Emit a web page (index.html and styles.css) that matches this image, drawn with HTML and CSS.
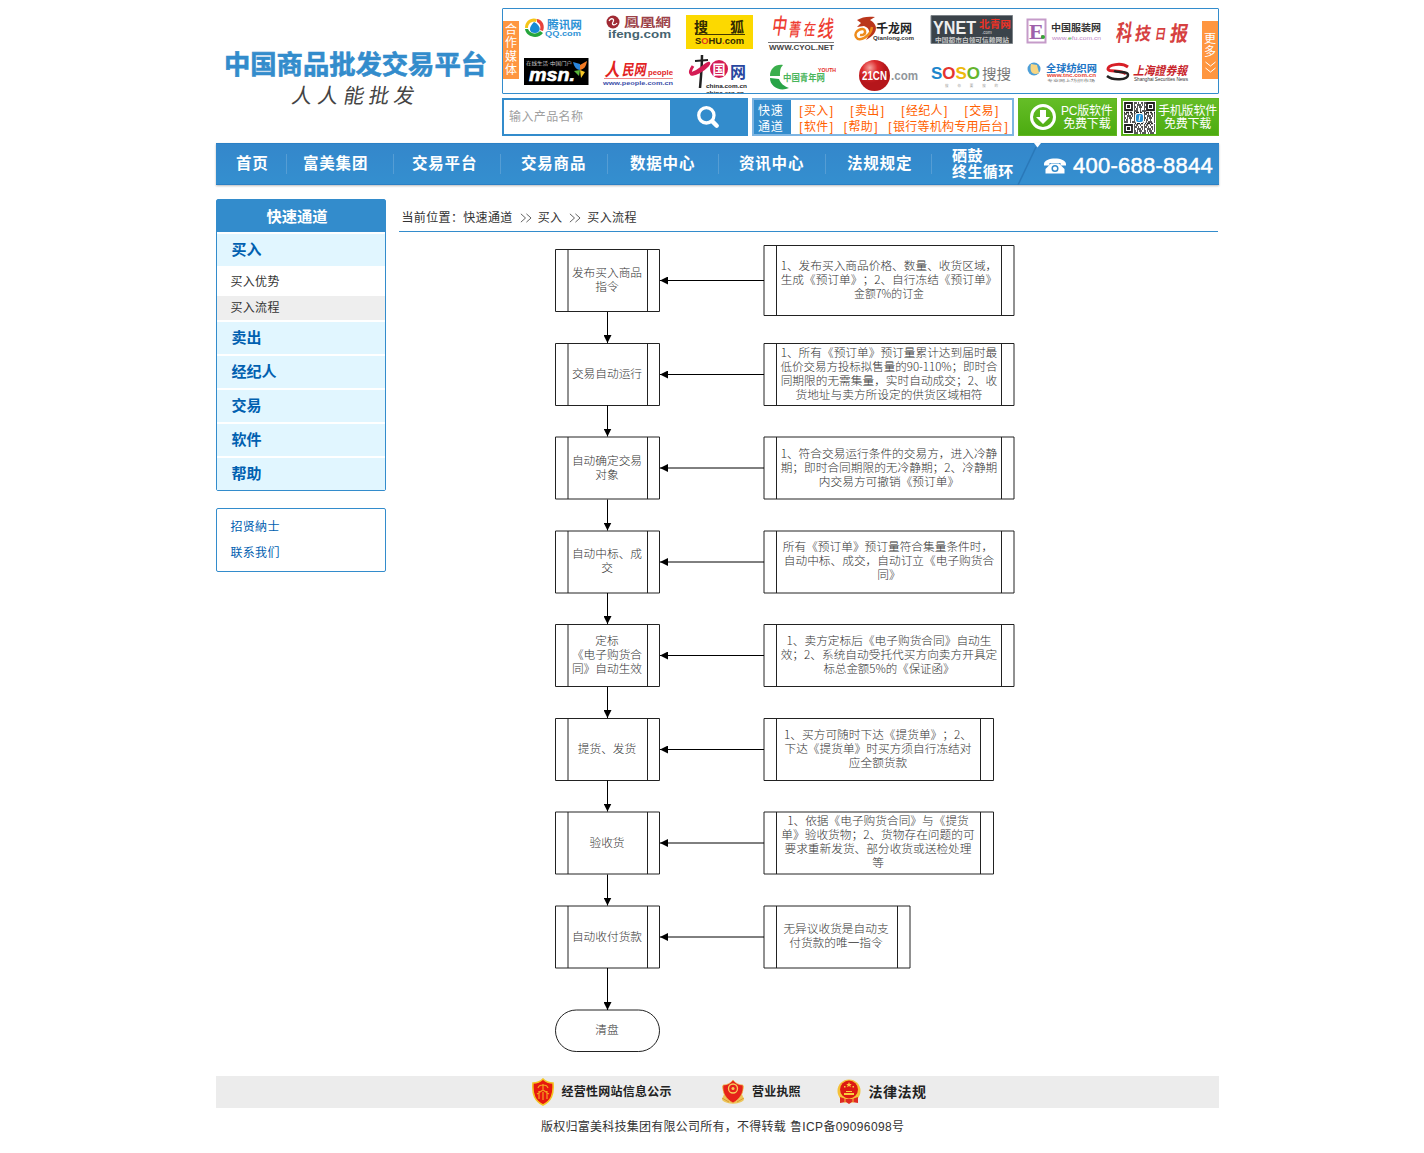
FILE: index.html
```html
<!DOCTYPE html>
<html lang="zh-CN">
<head>
<meta charset="utf-8">
<title>中国商品批发交易平台</title>
<link rel="stylesheet" href="styles.css">
</head>
<body>
<div class="page">
<header class="header">
  <svg class="brand" viewBox="216 8 286 128">
    <text class="brand-name" x="224" y="73.500" textLength="263" lengthAdjust="spacingAndGlyphs">中国商品批发交易平台</text>
    <g class="slogan" transform="translate(17 0) skewX(-10)">
      <text x="292" y="103">人</text><text x="318" y="103">人</text><text x="344" y="103">能</text><text x="369" y="103">批</text><text x="394" y="103">发</text>
    </g>
  </svg>
  <div class="header-right">
    <div class="media">
      <div class="tab">合作媒体</div>
      <div class="logos">
        <svg viewBox="519 9 81 42">
          <path d="M525 28c0-7 6-11 12-9l-1 3c-5-1-8 2-8 6z" fill="#f5c518"/>
          <path d="M537 19c6 1 8 7 6 12l-3-1c1-4 0-6-3-8z" fill="#e8413a"/>
          <path d="M525 29c1 8 13 11 18 4l-3-2c-3 4-10 3-12-2z" fill="#25a53c"/>
          <path d="M534 22c8 4 7 11 1 11s-7-5-1-11z" fill="#168bd3"/>
          <text x="547" y="29" font-size="11" font-weight="700" fill="#2e93d6" textLength="35" lengthAdjust="spacingAndGlyphs">腾讯网</text>
          <text x="545" y="36" font-size="7.500" font-weight="700" fill="#2e93d6" textLength="36" lengthAdjust="spacingAndGlyphs">QQ.com</text>
        </svg>
        <svg viewBox="600 9 80 42">
          <circle cx="613" cy="22" r="6.500" fill="#a02a34"/><path d="M609 21c2-4 6-2 4 1s2 4 4 1" fill="none" stroke="#fff" stroke-width="1.300"/>
          <text x="624" y="27" font-size="12" font-weight="700" fill="#9c4248" textLength="47" lengthAdjust="spacingAndGlyphs">鳳凰網</text>
          <text x="608" y="38" font-size="10" font-weight="700" fill="#466470" textLength="63" lengthAdjust="spacingAndGlyphs">ifeng.com</text>
        </svg>
        <svg viewBox="680 9 82 42">
          <path fill="#fcd900" d="M686 15h67v34h-67z"/>
          <text x="694" y="32" font-size="14" font-weight="700" fill="#332b00">搜</text><text x="730" y="32" font-size="14" font-weight="700" fill="#332b00">狐</text>
          <path d="M695 34.500h50" stroke="#443900"/>
          <text x="695" y="44" font-size="8.500" font-weight="700" fill="#332b00" textLength="49" lengthAdjust="spacingAndGlyphs">S<tspan fill="#e03a1d">O</tspan>HU<tspan fill="#e03a1d">.</tspan>com</text>
        </svg>
        <svg viewBox="762 9 86 42">
          <g fill="#ee3d32" font-weight="500" transform="translate(4 0) skewX(-8)"><text x="772" y="34" font-size="22" textLength="15" lengthAdjust="spacingAndGlyphs">中</text><text x="789" y="36" font-size="18" textLength="12" lengthAdjust="spacingAndGlyphs">菁</text><text x="804" y="35" font-size="16" textLength="12" lengthAdjust="spacingAndGlyphs">在</text><text x="818" y="37" font-size="23" textLength="16" lengthAdjust="spacingAndGlyphs">线</text></g>
          <path d="M768 42.500h66" stroke="#777"/>
          <text x="769" y="50" font-size="6.500" font-weight="700" fill="#444" textLength="65" lengthAdjust="spacingAndGlyphs">WWW.CYOL.NET</text>
        </svg>
        <svg viewBox="848 9 77 42">
          <path d="M857 20c5-3 11-4 18-3l-5 3c9 5 8 14-4 20 5-7 4-12-2-14l-7 1 4-4z" fill="#ba361c"/>
          <path d="M872 27c-1 9-13 16-16 10s8-11 9-6-5 4-5 4" fill="none" stroke="#ee8b1b" stroke-width="2.500"/>
          <text x="876" y="33" font-size="12" font-weight="700" fill="#222" textLength="36" lengthAdjust="spacingAndGlyphs">千龙网</text>
          <text x="873" y="39.500" font-size="5.500" font-weight="700" fill="#333" textLength="41" lengthAdjust="spacingAndGlyphs">Qianlong.com</text>
        </svg>
        <svg viewBox="925 9 93 42">
          <path fill="#3b434a" stroke="#7c8388" d="M931 15.500h81.500v28H931z"/>
          <text x="933" y="33.500" font-size="17.500" font-weight="700" fill="#eee" textLength="43" lengthAdjust="spacingAndGlyphs">YNET</text>
          <text x="979" y="27.500" font-size="10" font-weight="700" fill="#ee3226" textLength="32" lengthAdjust="spacingAndGlyphs">北青网</text>
          <text x="982" y="34" font-size="4.500" fill="#ddd">.com</text>
          <text x="935" y="41.500" font-size="5.500" font-weight="700" fill="#ccc" textLength="74" lengthAdjust="spacingAndGlyphs">中国都市白领可信赖网站</text>
        </svg>
        <svg viewBox="1018 9 92 42">
          <path d="M1027.500 19.500h18v23h-18z" fill="#fff" stroke="#c59bc9" stroke-width="2"/>
          <text x="1029" y="38.500" font-family="Liberation Serif" font-size="22" font-weight="700" fill="#9e60aa">E</text><circle cx="1043" cy="37" r="2" fill="#36a536"/>
          <text x="1051" y="31" font-size="9.500" font-weight="700" fill="#333" textLength="50" lengthAdjust="spacingAndGlyphs">中国服装网</text>
          <text x="1052" y="40" font-size="6" fill="#c186c6" textLength="49" lengthAdjust="spacingAndGlyphs">www.<tspan fill="#36a536">e</tspan>fu.com.cn</text>
        </svg>
        <svg viewBox="1110 9 92 42">
          <g fill="#d64040" font-weight="700" transform="translate(5 0) skewX(-8)"><text x="1116" y="41" font-size="23" textLength="16" lengthAdjust="spacingAndGlyphs">科</text><text x="1135" y="40" font-size="18" textLength="16" lengthAdjust="spacingAndGlyphs">技</text><text x="1155" y="39" font-size="14" textLength="11" lengthAdjust="spacingAndGlyphs">日</text><text x="1170" y="41" font-size="21" textLength="18" lengthAdjust="spacingAndGlyphs">报</text></g>
        </svg>
        <svg viewBox="519 51 81 42">
          <path d="M524 58h64.500v27H524z"/>
          <text x="526" y="65" font-size="5" fill="#ccc" textLength="46" lengthAdjust="spacingAndGlyphs">在线生活·中国门户</text>
          <text x="529" y="80.500" font-size="19" font-style="italic" font-weight="700" fill="#fff" stroke="#fff" stroke-width=".600" textLength="46" lengthAdjust="spacingAndGlyphs">msn.</text>
          <path d="M573 62l7 2v6c-4 0-6-4-7-8z" fill="#2a86dd"/><path d="M580 65l7-4c-1 6-3 8-7 9z" fill="#f47b24"/><path d="M574 71l6-1-1 6z" fill="#5bb53b"/><path d="M580 70l5 2-4 6z" fill="#f8c726"/>
        </svg>
        <svg viewBox="600 51 80 42">
          <g fill="#e2231f" font-weight="700" transform="translate(14 0) skewX(-10)"><text x="604" y="76" font-size="18" textLength="15" lengthAdjust="spacingAndGlyphs">人</text><text x="621" y="75" font-size="15" textLength="24" lengthAdjust="spacingAndGlyphs">民网</text></g>
          <text x="648" y="75" font-size="8" font-weight="700" fill="#e2231f" textLength="25" lengthAdjust="spacingAndGlyphs">people</text>
          <path d="M604 78.500h69" stroke="#e88"/>
          <text x="603" y="84.500" font-size="6" font-weight="700" fill="#3c4fa9" textLength="70" lengthAdjust="spacingAndGlyphs">www.people.com.cn</text>
        </svg>
        <svg viewBox="680 51 82 42">
          <path d="M702 55c0 12-1 22-2 33" fill="none" stroke="#222" stroke-width="2.500"/><path d="M695 61l13-1" stroke="#222" stroke-width="2"/>
          <path d="M693 66c-6 9-1 10 6 6s13-11 8-8-6 6-16 10" fill="none" stroke="#d41c54" stroke-width="3"/>
          <ellipse cx="719" cy="69" rx="9" ry="9" fill="#d41c54"/><text x="712.500" y="74" font-size="13" font-weight="700" fill="#fff">国</text>
          <text x="730" y="78" font-size="16" font-weight="700" fill="#2846a0">网</text>
          <text x="706" y="88" font-size="6" font-weight="700" fill="#222" textLength="41" lengthAdjust="spacingAndGlyphs">china.com.cn</text>
          <text x="706" y="94.500" font-size="6" font-weight="700" fill="#222" textLength="38" lengthAdjust="spacingAndGlyphs">china.org.cn</text>
        </svg>
        <svg viewBox="762 51 86 42">
          <path d="M783 65c-8-1-13 4-13 11l10 0c0-5 0-8 3-11z" fill="#3aae4c"/><path d="M770 78l9 1c2 5 5 7 10 9-9 4-19-1-19-10z" fill="#28a447"/>
          <text x="783" y="81" font-size="9.500" font-weight="700" fill="#49b55b" textLength="42" lengthAdjust="spacingAndGlyphs">中国青年网</text>
          <text x="818" y="71.500" font-size="5" font-weight="700" fill="#e52a27" textLength="18" lengthAdjust="spacingAndGlyphs">YOUTH</text>
        </svg>
        <svg viewBox="848 51 77 42">
          <defs><radialGradient id="ball" cx=".35" cy=".25"><stop stop-color="#f6a5a0"/><stop offset=".5" stop-color="#dc2a2c"/><stop offset="1" stop-color="#b5161b"/></radialGradient></defs>
          <circle cx="874.500" cy="75.500" r="15.500" fill="url(#ball)"/>
          <text x="862" y="80" font-size="12" font-weight="700" fill="#fff" textLength="25" lengthAdjust="spacingAndGlyphs">21CN</text>
          <text x="891" y="80" font-size="13" font-weight="700" fill="#90969b" textLength="27" lengthAdjust="spacingAndGlyphs">.com</text>
        </svg>
        <svg viewBox="925 51 93 42">
          <text x="931" y="79" font-size="17" font-weight="700" textLength="49" lengthAdjust="spacingAndGlyphs"><tspan fill="#1c86cc">S</tspan><tspan fill="#e5352f">O</tspan><tspan fill="#eeb90b">S</tspan><tspan fill="#65b52e">O</tspan></text>
          <text x="982" y="78.500" font-size="14" fill="#777" textLength="29" lengthAdjust="spacingAndGlyphs">搜搜</text>
          <text x="945" y="87" font-size="3.500" fill="#999" textLength="53">搜你要搜的</text>
        </svg>
        <svg viewBox="1018 51 92 42">
          <circle cx="1034" cy="69" r="6.500" fill="#4d9fd8"/><path d="M1031 64c-2 8 2 12 8 9l-2-8z" fill="#f7d683"/>
          <text x="1046" y="71.500" font-size="10" font-weight="700" fill="#1c75c5" textLength="51" lengthAdjust="spacingAndGlyphs">全球纺织网</text>
          <text x="1047" y="77" font-size="4.500" font-weight="700" fill="#e53f30" textLength="49" lengthAdjust="spacingAndGlyphs">www.tnc.com.cn</text>
          <text x="1047" y="82" font-size="3.500" fill="#777" textLength="48" lengthAdjust="spacingAndGlyphs">专业网上纺织市场</text>
        </svg>
        <svg viewBox="1110 51 92 42">
          <path d="M1128 67c-7-5-20-2-20 2 0 3 14 1 18 5" fill="none" stroke="#d71f27" stroke-width="3"/><path d="M1107 76c6 5 21 4 21-1 0-4-10-2-14-4" fill="none" stroke="#222" stroke-width="2.500"/>
          <text x="1133" y="75" font-size="12" font-style="italic" font-weight="700" fill="#c8242a" textLength="54" lengthAdjust="spacingAndGlyphs">上海證券報</text>
          <text x="1134" y="81" font-size="4.500" fill="#333" textLength="54" lengthAdjust="spacingAndGlyphs">Shanghai Securities News</text>
        </svg>
      </div>
      <div class="tab more">更多<svg width="11" height="12" viewBox="0 0 11 12"><path d="M.500 1l5 4 5-4M.500 7l5 4 5-4" fill="none" stroke="#fff"/></svg></div>
    </div>
    <div class="tools">
      <div class="search"><span class="field">输入产品名称</span><span class="go"><svg width="24" height="24" viewBox="0 0 22 22"><circle cx="9.500" cy="9.500" r="7" fill="none" stroke="#fff" stroke-width="3"/><path d="M15 15l4 4" stroke="#fff" stroke-width="4" stroke-linecap="round"/></svg></span></div>
      <div class="quick">
        <div class="quick-label">快速<br>通道</div>
        <div class="quick-links">
          <div class="row first"><a>买入</a><a>卖出</a><a>经纪人</a><a>交易</a></div>
          <div class="row"><a>软件</a><a>帮助</a><a>银行等机构专用后台</a></div>
        </div>
      </div>
      <div class="dl pc"><svg width="28" height="28" viewBox="0 0 28 28"><circle cx="14" cy="14" r="11.500" fill="none" stroke="#fff" stroke-width="3"/><path d="M11 7h6v7h4l-7 7-7-7h4z" fill="#fff"/></svg><span>PC版软件<br>免费下载</span></div>
      <div class="dl phone"><svg width="33" height="33" viewBox="0 0 33 33"><path fill="#fff" d="M0 0h33v33H0z"/>
        <g stroke="#222" stroke-width="1.400" fill="none">
        <path stroke-dasharray="3 1 1 2 2 1" d="M11 2h12M1 13h31M11 26h21"/><path stroke-dasharray="1 2 4 1 1 1" d="M11 4h12M1 15h31M11 28h21"/><path stroke-dasharray="2 1 1 1 3 2" d="M11 6h12M1 17h31M11 30h21"/><path stroke-dasharray="1 1 2 2 1 3" d="M11 8h12M1 19h31M11 24h21"/><path stroke-dasharray="4 2 1 1" d="M11 10h12M1 21h31M11 32h21"/><path stroke-dasharray="1 1 3 1 2 2" d="M1 11.500h31M12 22.500h20"/>
        <path stroke-width="1.800" d="M2 2h7v7H2zM24 2h7v7h-7zM2 24h7v7H2z"/></g>
        <path fill="#222" d="M4 4h3v3H4zM26 4h3v3h-3zM4 26h3v3H4z"/><rect x="12" y="12" width="9" height="10" rx="2" fill="#fff"/><rect x="13" y="13" width="7" height="8" rx="2" fill="#2292d8"/><path d="M17 14l-1 6" stroke="#fff"/></svg><span>手机版软件<br>免费下载</span></div>
    </div>
  </div>
</header>

<nav class="nav">
  <a class="n1">首页</a><a class="n2">富美集团</a><a class="n3">交易平台</a><a class="n4">交易商品</a><a class="n5">数据中心</a><a class="n6">资讯中心</a><a class="n7">法规规定</a><a class="n8">硒鼓<br>终生循环</a>
  <svg class="slant" viewBox="1014 143 30 42"><path d="M1036 147l-18 38" stroke="#2a78b8" stroke-width="1.500"/><path d="M1034 143h7l-3.500 4.500z" fill="#fff"/></svg>
  <svg class="tel" viewBox="0 0 22 16"><path d="M0 6C0-1.500 22-1.500 22 6v1.500h-5.500V5h-11v2.500H0z" fill="#fff"/><path d="M7 5.500h8l5.500 5.500v4.500h-19V11z" fill="#fff"/><circle cx="11" cy="10.500" r="2.800" fill="none" stroke="#338ccc" stroke-width="1.500"/></svg>
  <span class="number">400-688-8844</span>
</nav>

<div class="main">
  <aside class="side">
    <div class="menu">
      <h2>快速通道</h2>
      <a class="group">买入</a>
      <div class="sub"><a>买入优势</a><a class="on">买入流程</a></div>
      <a class="group">卖出</a><a class="group">经纪人</a><a class="group">交易</a><a class="group">软件</a><a class="group">帮助</a>
    </div>
    <div class="contact"><a>招贤納士</a><a>联系我们</a></div>
  </aside>
  <section class="content">
    <div class="crumb">当前位置：快速通道<svg class="sep" viewBox="0 0 25 26"><path d="M7.500 8.500l5 4.500-5 4.500M13.500 8.500l5 4.500-5 4.500"/></svg>买入<svg class="sep" viewBox="0 0 25 26"><path d="M7.500 8.500l5 4.500-5 4.500M13.500 8.500l5 4.500-5 4.500"/></svg>买入流程</div>
    <svg class="flow" viewBox="399 232 819 844">
      <defs>
        <marker id="arrow" markerUnits="userSpaceOnUse" markerWidth="8" markerHeight="8" refX="8" refY="4" orient="auto"><path d="M0 0l8 4-8 4z"/></marker>
        <path id="step" d="M555.500 .500h104v62h-104zM568 .500v62M647.500 .500v62"/>
        <path id="wide" d="M764 .500h250v62H764zM776.500 .500v62M1001.500 .500v62"/>
        <path id="mid" d="M764 .500h229.500v62H764zM776.500 .500v62M980.500 .500v62"/>
      </defs>
      <g class="shapes">
        <use href="#step" y="249"/><use href="#step" y="343"/><use href="#step" y="436.500"/><use href="#step" y="530.500"/><use href="#step" y="624"/><use href="#step" y="718"/><use href="#step" y="811.500"/><use href="#step" y="905.500"/>
        <path d="M764 245.500h250v70H764zM776.500 245.500v70M1001.500 245.500v70"/>
        <use href="#wide" y="343"/><use href="#wide" y="436.500"/><use href="#wide" y="530.500"/><use href="#wide" y="624"/><use href="#mid" y="718"/><use href="#mid" y="811.500"/>
        <path d="M764 906h146v62H764zM776.500 906v62M897.500 906v62"/>
        <rect x="555.500" y="1010" width="104" height="41.500" rx="20.750"/>
      </g>
      <g class="arrows">
        <path d="M607.500 312v31"/><path d="M607.500 405.500v31"/><path d="M607.500 499.500v31"/><path d="M607.500 593v31"/><path d="M607.500 687v31"/><path d="M607.500 780.500v31"/><path d="M607.500 874.500v31"/><path d="M607.500 968v42"/>
        <path d="M764 280.500H660"/><path d="M764 374.500H660"/><path d="M764 468H660"/><path d="M764 562H660"/><path d="M764 655.500H660"/><path d="M764 749.500H660"/><path d="M764 843H660"/><path d="M764 937H660"/>
      </g>
      <g class="labels">
        <text x="607" y="276.500">发布买入商品</text><text x="607" y="290.500">指令</text>
        <text x="607" y="377.500">交易自动运行</text>
        <text x="607" y="464.500">自动确定交易</text><text x="607" y="478.500">对象</text>
        <text x="607" y="558">自动中标、成</text><text x="607" y="572">交</text>
        <text x="607" y="644.500">定标</text><text x="607" y="658.500">《电子购货合</text><text x="607" y="672.500">同》自动生效</text>
        <text x="607" y="752.500">提货、发货</text><text x="607" y="846.500">验收货</text><text x="607" y="940.500">自动收付货款</text><text x="607" y="1034">清盘</text>
        <text x="889" y="269.500">1、发布买入商品价格、数量、收货区域，</text><text x="889" y="283.500">生成《预订单》；2、自行冻结《预订单》</text><text x="889" y="297.500" textLength="70" lengthAdjust="spacingAndGlyphs">金额7%的订金</text>
        <text x="889" y="356.500">1、所有《预订单》预订量累计达到届时最</text><text x="889" y="370.500" textLength="217" lengthAdjust="spacingAndGlyphs">低价交易方投标拟售量的90-110%；即时合</text><text x="889" y="384.500">同期限的无需集量，实时自动成交；2、收</text><text x="889" y="398.500">货地址与卖方所设定的供货区域相符</text>
        <text x="889" y="457.500">1、符合交易运行条件的交易方，进入冷静</text><text x="889" y="471.500">期；即时合同期限的无冷静期；2、冷静期</text><text x="889" y="485.500">内交易方可撤销《预订单》</text>
        <text x="888" y="551">所有《预订单》预订量符合集量条件时，</text><text x="889" y="565">自动中标、成交，自动订立《电子购货合</text><text x="889" y="579">同》</text>
        <text x="889" y="644.500">1、卖方定标后《电子购货合同》自动生</text><text x="889" y="658.500">效；2、系统自动受托代买方向卖方开具定</text><text x="889" y="672.500" textLength="131" lengthAdjust="spacingAndGlyphs">标总金额5%的《保证函》</text>
        <text x="878" y="738.500">1、买方可随时下达《提货单》；2、</text><text x="878" y="752.500">下达《提货单》时买方须自行冻结对</text><text x="878" y="766.500">应全额货款</text>
        <text x="878" y="825">1、依据《电子购货合同》与《提货</text><text x="878" y="839">单》验收货物；2、货物存在问题的可</text><text x="878" y="853">要求重新发货、部分收货或送检处理</text><text x="878" y="867">等</text>
        <text x="836" y="933">无异议收货是自动支</text><text x="836" y="947">付货款的唯一指令</text>
      </g>
    </svg>
  </section>
</div>

<footer>
  <div class="badges">
    <svg width="22" height="28" viewBox="0 0 22 28"><path d="M1 5c4 0 7-1 10-4 3 3 6 4 10 4 1 12-2 18-10 22C3 23 0 17 1 5z" fill="#e6180e" stroke="#f4c522" stroke-width="1.600"/><path d="M11 6v6M6 10c1-4 9-4 10 0M5 16l6-4 6 4M7 13v8M15 13v8M11 14v8" fill="none" stroke="#f5a020" stroke-width="1.200"/></svg>
    <span class="b1">经营性网站信息公示</span>
    <svg width="24" height="26" viewBox="0 0 24 26"><path d="M1 7l2 8-2 6c5 5 17 5 22 0l-2-6 2-8z" fill="#edc65c"/><path d="M2 6c4 0 8-2 10-5 2 3 6 5 10 5 1 8-3 14-10 18C5 20 1 14 2 6z" fill="#e6221a" stroke="#f2c455" stroke-width=".700"/><circle cx="12" cy="9.500" r="4.500" fill="none" stroke="#f7cc57" stroke-width="1.300"/><circle cx="12" cy="9.500" r="1.500" fill="#f7cc57"/><path d="M1 19l7 4M23 19l-7 4" fill="none" stroke="#d99b32"/></svg>
    <span class="b2">营业执照</span>
    <svg width="24" height="26" viewBox="0 0 24 26"><circle cx="12" cy="12" r="11.500" fill="#f5c138"/><circle cx="12" cy="10.500" r="9" fill="#dc1a12"/><path d="M12 3l.800 2h2l-1.500 1.200.600 2L12 7l-1.900 1.200.600-2L9.200 5h2zM7 7h1.500v1.500H7zM15.500 7H17v1.500h-1.500zM7 14h10v2H7zM9 12h6v1H9z" fill="#f9cf3d"/><path d="M3 18l6 2h6l6-2v6l-6-1-3 2-3-2-6 1z" fill="#df2920"/><path d="M8 19v5M16 19v5" stroke="#f5c138"/></svg>
    <span class="b3">法律法规</span>
  </div>
  <p class="copy">版权归富美科技集团有限公司所有，不得转载<span>鲁ICP备09096098号</span></p>
</footer>
</div>
</body>
</html>
```
FILE: styles.css
```css
* { box-sizing: border-box; }
body {
  margin: 0;
  background: #fff;
  color: #333;
  font: 12px/16px "Liberation Sans", "Noto Sans CJK SC", sans-serif;
  text-spacing-trim: space-all;
}
svg { display: block; flex: none; }
text { white-space: pre; }
.page { width: 1003px; margin-left: 216px; padding-top: 8px; }

.header { display: flex; height: 128px; }
.brand { width: 286px; height: 128px; }
.brand-name { font-size: 26px; font-weight: 700; fill: #338ccc; stroke: #338ccc; stroke-width: .6px; }
.slogan { font-size: 20.5px; fill: #444; }
.header-right { width: 717px; }
.media { display: flex; align-items: center; height: 86px; border: 1px solid #338ccc; border-radius: 1px; }
.tab {
  width: 16px; height: 58px; margin-top: -2px; padding-top: 3px; background: #ff9640; color: #fff;
  font-size: 12px; line-height: 13.3px; text-align: center; word-break: break-all;
}
.more { padding-top: 12px; }
.more svg { margin: 1px auto 0; }
.logos { display: grid; grid-template: 42px 42px / 81px 80px 82px 86px 77px 93px 92px 92px; }
.logos svg { width: 100%; height: 42px; }
.logos svg:last-child { overflow: visible; }
.tools { display: flex; height: 38px; margin-top: 4px; }
.search { display: flex; width: 246px; margin-right: 4px; border: 2px solid #338ccc; background: #338ccc; }
.field { width: 166px; padding: 9px 5px; background: #fff; color: #a0a0a0; letter-spacing: .4px; }
.go { display: flex; flex: 1; align-items: center; justify-content: center; }
.quick { display: flex; width: 262px; margin-right: 4px; border: 2px solid #7eb5e2; }
.quick-label { width: 37px; padding: 3px 0 0 4px; background: #338ccc; color: #fff; letter-spacing: .8px; white-space: nowrap; }
.quick-links { padding: 3px 0 0 7px; color: #ff6000; letter-spacing: .25px; white-space: nowrap; }
.row { display: flex; gap: 8px; }
.row.first { gap: 14.5px; }
.row a::before, .row a::after { display: inline-block; width: 6px; text-align: center; }
.row a::before { content: "["; }
.row a::after { content: "]"; }
.dl {
  display: flex; align-items: center; color: #fff; line-height: 13px; text-align: center;
  white-space: nowrap; border: 1px solid #63b51f; background: linear-gradient(#65bd27, #4cab10);
}
.dl span { padding-top: 1px; }
.pc { width: 99px; margin-right: 4px; padding-left: 10px; gap: 4px; }
.pc span { letter-spacing: -.2px; }
.phone { width: 98px; padding-left: 1px; gap: 2px; }
.phone span { letter-spacing: -.2px; }

.nav {
  display: flex; height: 42px; margin-top: 7px; color: #fff;
  background: linear-gradient(#3487cb, #348fcf); border: solid #2b80c5; border-width: 1px 0;
  box-shadow: 0 1px 2px #bbb; font-size: 15.5px; font-weight: 700; letter-spacing: .8px;
}
.nav a { height: 40px; line-height: 39px; white-space: nowrap; background: linear-gradient(#559dd4, #559dd4) right 10px / 1px 20px no-repeat; }
.n1 { width: 71px; padding-left: 20px; }
.n2 { width: 107px; padding-left: 16px; }
.n3 { width: 107px; padding-left: 18px; }
.n4 { width: 107px; padding-left: 20px; }
.n5 { width: 111px; padding-left: 22px; }
.n6 { width: 107px; padding-left: 20px; }
.n7 { width: 106px; padding-left: 21px; }
.nav .n8 { width: 82px; padding: 4px 0 0 20px; font-size: 15px; line-height: 16px; letter-spacing: .4px; background: none; }
.slant { width: 30px; height: 42px; margin-top: -1px; }
.tel { width: 22px; height: 16px; margin: 14px 7px 0 0; }
.number { font: 22px/44px "Liberation Sans", sans-serif; letter-spacing: .25px; -webkit-text-stroke: .5px #fff; }

.main { display: flex; gap: 13px; margin-top: 14px; height: 877px; }
.side { width: 170px; }
.menu { display: flex; flex-direction: column; gap: 2px; border: 1px solid #338ccc; border-radius: 2px; }
.menu h2 { margin: 0; height: 32px; padding-right: 8px; background: #338ccc; color: #fff; font-size: 15.3px; line-height: 33px; text-align: center; }
.group { height: 32px; padding-left: 14.5px; background: #e1f6ff; color: #0060b0; font-size: 15px; font-weight: 700; line-height: 31px; }
.sub { padding-top: 2px; }
.sub a { display: block; height: 26px; padding-left: 13.5px; line-height: 25px; letter-spacing: .3px; }
.sub .on { height: 24px; background: #eee; }
.contact { height: 64px; margin-top: 17px; padding: 5px 13.5px; border: 1px solid #338ccc; border-radius: 2px; }
.contact a { display: block; color: #0060b0; line-height: 26px; letter-spacing: .3px; }
.content { width: 819px; }
.crumb { display: flex; height: 33px; padding: 7px 0 0 2.5px; border-bottom: 1px solid #338ccc; line-height: 25px; letter-spacing: .35px; }
.sep { width: 25px; height: 24px; fill: none; stroke: #444; stroke-width: .9; }
.flow { width: 819px; height: 844px; }
.shapes { fill: none; stroke: #222; stroke-width: 1; }
.arrows path { stroke: #000; marker-end: url(#arrow); }
.labels { font: 300 11.7px "Noto Sans CJK SC", sans-serif; fill: #333; text-anchor: middle; }

.badges { display: flex; align-items: center; height: 32px; padding-left: 316px; background: #ececec; color: #222; font-weight: 700; white-space: nowrap; }
.badges span { margin-left: 7.5px; }
.b1 { width: 159px; letter-spacing: .25px; }
.b2 { width: 85px; letter-spacing: .2px; }
.b3 { font-size: 14px; letter-spacing: .5px; }
.copy { display: flex; margin: 11px 0 0; padding-left: 325px; letter-spacing: .25px; white-space: nowrap; }
.copy span { margin-left: 4px; letter-spacing: .35px; }
```
